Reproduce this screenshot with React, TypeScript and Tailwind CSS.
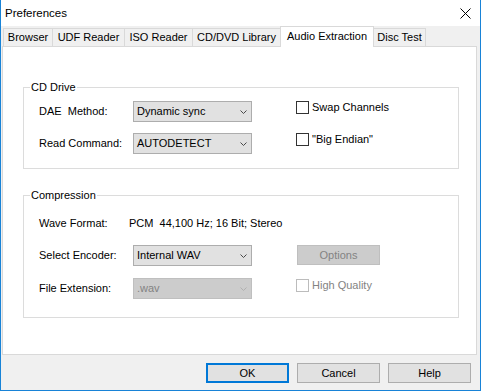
import React from 'react';

const tabs = [
  { name: 'Browser', w: 'w-[50px]' },
  { name: 'UDF Reader', w: 'w-[73px]' },
  { name: 'ISO Reader', w: 'w-[69px]' },
  { name: 'CD/DVD Library', w: 'w-[89px]' },
  { name: 'Audio Extraction', w: 'w-[94px]', active: true },
  { name: 'Disc Test', w: 'w-[53px]' },
];

function Chevron({ color }: { color: string }) {
  return (
    <svg width="7" height="4" viewBox="0 0 7 4" className="shrink-0">
      <path d="M0.5 0.5 L3.5 3.5 L6.5 0.5" fill="none" stroke={color} strokeWidth="1" />
    </svg>
  );
}

function Combo({ value, disabled }: { value: string; disabled?: boolean }) {
  return (
    <div
      className={`flex h-[21px] w-[119px] items-center justify-between border pl-[3px] pr-[4px] ${
        disabled ? 'border-[#bfbfbf] bg-[#cccccc] text-[#838383]' : 'border-[#adadad] bg-[#e1e1e1] text-black'
      }`}
    >
      <span>{value}</span>
      <Chevron color={disabled ? '#b0b0b0' : '#4a4a4a'} />
    </div>
  );
}

function Check({ label, disabled }: { label: string; disabled?: boolean }) {
  return (
    <div className="flex items-center gap-[3px] leading-[13px]">
      <span className={`h-[13px] w-[13px] border bg-white ${disabled ? 'border-[#bcbcbc]' : 'border-[#333333]'}`} />
      <span className={disabled ? 'text-[#838383]' : 'text-black'}>{label}</span>
    </div>
  );
}

function Button({ label, primary }: { label: string; primary?: boolean }) {
  return (
    <button
      className={`flex h-[20px] w-[83px] items-center justify-center bg-[#e1e1e1] ${
        primary ? 'border-2 border-[#0078d7]' : 'border border-[#adadad]'
      }`}
    >
      {label}
    </button>
  );
}

export default function App() {
  return (
    <div className="flex h-[391px] w-[481px] flex-col border-x border-b border-[#1883d7] bg-[#f0f0f0] font-['Liberation_Sans',Arial,sans-serif] text-[11px] text-black">
      {/* title bar */}
      <div className="flex h-[26px] items-center justify-between bg-white pl-[4px] pt-[1px]">
        <span className="text-[11.5px]">Preferences</span>
        <svg width="11" height="11" viewBox="0 0 11 11" className="mr-[9px]">
          <path d="M0.5 0.5 L10.5 10.5 M10.5 0.5 L0.5 10.5" stroke="#000" strokeWidth="1" />
        </svg>
      </div>

      {/* tabs */}
      <div className="flex h-[20px] items-end pl-[2px]">
        {tabs.map((t, i) =>
          t.active ? (
            <div
              key={t.name}
              className={`relative z-10 -mb-px -ml-px flex h-[21px] items-center justify-center border-x border-t border-[#d9d9d9] bg-white pb-[2px] ${t.w}`}
            >
              {t.name}
            </div>
          ) : (
            <div
              key={t.name}
              className={`flex h-[18px] items-center justify-center border-x border-t border-[#d9d9d9] bg-[#f0f0f0] ${t.w} ${i > 0 ? '-ml-px' : ''}`}
            >
              {t.name}
            </div>
          )
        )}
      </div>

      {/* panel */}
      <div className="ml-[1px] h-[309px] w-[475px] border border-[#d9d9d9] bg-white">
        <div className="relative ml-[20px] mt-[40px] h-[82px] w-[436px] border border-[#dcdcdc]">
          <span className="absolute left-[6px] top-[-8px] bg-white px-[1px] leading-[14px]">CD Drive</span>
          <div className="flex flex-col gap-[11px] pl-[15px] pt-[13px]">
            <div className="flex items-start">
              <span className="w-[94px] whitespace-pre leading-[21px]">DAE  Method:</span>
              <Combo value="Dynamic sync" />
              <div className="ml-[44px]">
                <Check label="Swap Channels" />
              </div>
            </div>
            <div className="flex items-start">
              <span className="w-[94px] leading-[21px]">Read Command:</span>
              <Combo value="AUTODETECT" />
              <div className="ml-[44px]">
                <Check label={'"Big Endian"'} />
              </div>
            </div>
          </div>
        </div>

        <div className="relative ml-[20px] mt-[26px] h-[123px] w-[436px] border border-[#dcdcdc]">
          <span className="absolute left-[6px] top-[-8px] bg-white px-[1px] leading-[14px]">Compression</span>
          <div className="flex flex-col pl-[15px] pt-[17px]">
            <div className="flex h-[21px] items-center">
              <span className="w-[90px]">Wave Format:</span>
              <span className="whitespace-pre">PCM  44,100 Hz; 16 Bit; Stereo</span>
            </div>
            <div className="mt-[11px] flex items-start">
              <span className="w-[94px] leading-[21px]">Select Encoder:</span>
              <Combo value="Internal WAV" />
              <button className="ml-[45px] flex h-[20px] w-[83px] items-center justify-center border border-[#bfbfbf] bg-[#cccccc] text-[#838383]">
                Options
              </button>
            </div>
            <div className="mt-[12px] flex items-start">
              <span className="w-[94px] leading-[21px]">File Extension:</span>
              <Combo value=".wav" disabled />
              <div className="ml-[44px] mt-[1px]">
                <Check label="High Quality" disabled />
              </div>
            </div>
          </div>
        </div>
      </div>

      {/* buttons */}
      <div className="flex h-[35px] justify-end gap-[8px] pr-[9px] pt-[8px]">
        <Button label="OK" primary />
        <Button label="Cancel" />
        <Button label="Help" />
      </div>
    </div>
  );
}
